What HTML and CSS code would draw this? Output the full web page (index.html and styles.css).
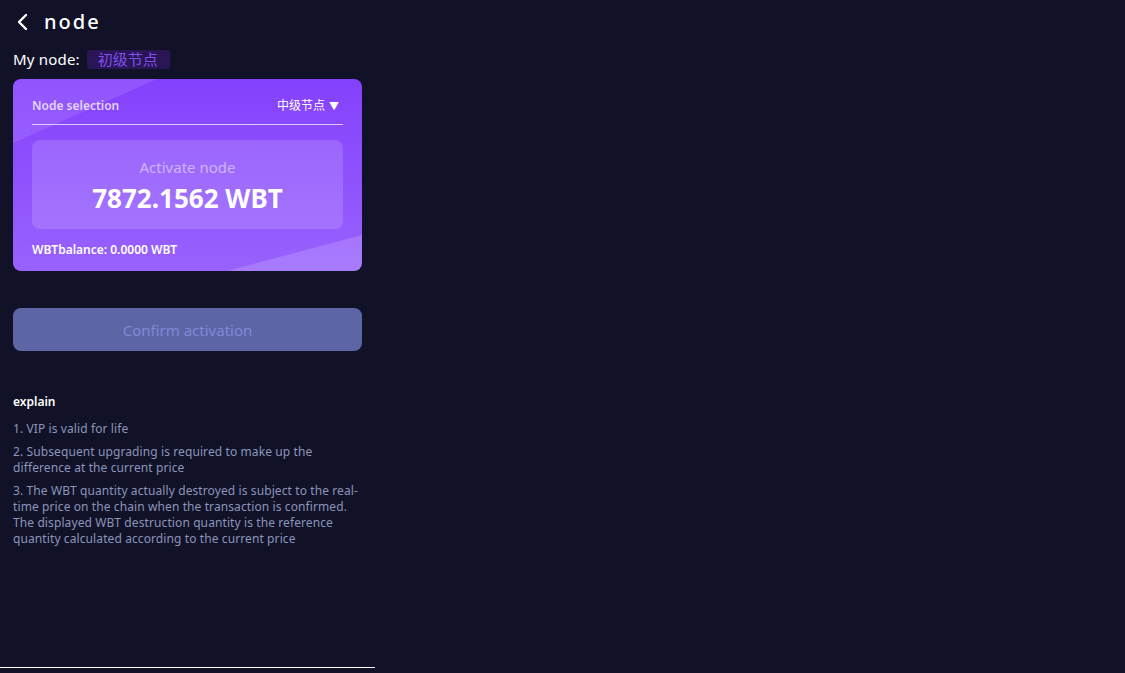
FILE: index.html
```html
<!DOCTYPE html>
<html lang="en">

<head>
    <meta charset="utf-8">
    <meta name="viewport" content="width=device-width, initial-scale=1.0">
    <title>node</title>
    <link rel="stylesheet" href="styles.css">
</head>

<body>
    <div class="page">
        <header class="topbar">
            <svg class="back" width="14" height="18" viewBox="0 0 14 18">
                <path d="M10 2 L3 9 L10 16" fill="none" stroke="#fff" stroke-width="2.4" stroke-linecap="round" stroke-linejoin="round" />
            </svg>
            <h1>node</h1>
        </header>

        <div class="mynode">
            <span>My node:</span>
            <span class="badge">初级节点</span>
        </div>

        <section class="card">
            <div class="card-head">
                <span class="label">Node selection</span>
                <span class="select">中级节点 <i class="arrow">▼</i></span>
            </div>
            <div class="amount">
                <p class="amount-title">Activate node</p>
                <p class="amount-value">7872.1562 WBT</p>
            </div>
            <p class="balance">WBTbalance: 0.0000 WBT</p>
        </section>

        <button class="confirm">Confirm activation</button>

        <section class="explain">
            <h2>explain</h2>
            <p>1. VIP is valid for life</p>
            <p>2. Subsequent upgrading is required to make up the difference at the current price</p>
            <p>3. The WBT quantity actually destroyed is subject to the real-time price on the chain when the transaction is confirmed. The displayed WBT destruction quantity is the reference quantity calculated according to the current price</p>
        </section>

        <div class="bottom-line"></div>
    </div>
</body>

</html>
```

FILE: styles.css
```css
* {
    box-sizing: border-box;
}

html,
body {
    margin: 0;
    height: 100%;
    background: #111228;
}

body {
    font-family: "Noto Sans", "Noto Sans CJK SC", sans-serif;
    color: #fff;
}

.page {
    width: 375px;
    height: 673px;
    padding: 0 13px;
    display: flex;
    flex-direction: column;
}

.topbar {
    height: 44px;
    display: flex;
    align-items: center;
    gap: 14px;
    padding-left: 3px;
}

.topbar h1 {
    margin: 0;
    font-size: 20px;
    font-weight: 500;
    letter-spacing: 2px;
    line-height: 1;
}

.mynode {
    display: flex;
    align-items: center;
    gap: 7px;
    font-size: 15px;
    height: 20px;
    margin-top: 5px;
    letter-spacing: 0.2px;
}

.badge {
    background: #2a1656;
    color: #7f50ec;
    font-size: 15px;
    letter-spacing: 0;
    padding: 0 12px 0 11px;
    height: 19px;
    line-height: 19px;
    border-radius: 3px;
}

.card {
    position: relative;
    overflow: hidden;
    margin-top: 10px;
    height: 192px;
    border-radius: 8px;
    padding: 0 19px;
    background: linear-gradient(180deg, #8441fd 0%, #9862fd 100%);
    display: flex;
    flex-direction: column;
}

.card::before,
.card::after {
    content: "";
    position: absolute;
    inset: 0;
    background: rgba(255, 255, 255, 0.1);
}

.card::before {
    clip-path: polygon(0 0, 144px 0, 0 64px);
}

.card::after {
    background: rgba(255, 255, 255, 0.16);
    clip-path: polygon(214px 100%, 100% 156px, 100% 100%);
}

.card > * {
    position: relative;
    z-index: 1;
}

.card-head {
    height: 46px;
    display: flex;
    justify-content: space-between;
    align-items: center;
    padding-top: 7px;
    font-size: 12px;
    border-bottom: 1px solid rgba(255, 255, 255, 0.7);
}

.label {
    color: #e3d4ff;
    font-weight: 600;
}

.select {
    color: #fff;
    padding-right: 4px;
}

.arrow {
    font-style: normal;
    font-size: 10px;
    margin-left: 1px;
}

.amount {
    margin-top: 15px;
    height: 89px;
    border-radius: 8px;
    background: rgba(255, 255, 255, 0.15);
    text-align: center;
    padding-top: 17px;
}

.amount-title {
    margin: 0;
    font-size: 15px;
    color: rgba(255, 255, 255, 0.5);
    line-height: 20px;
}

.amount-value {
    margin: 6px 0 0;
    font-size: 26px;
    font-weight: 700;
    line-height: 30px;
}

.balance {
    margin: 12px 0 0;
    font-size: 12px;
    font-weight: 600;
}

.confirm {
    margin-top: 37px;
    height: 43px;
    border: none;
    border-radius: 8px;
    background: #5d65a6;
    color: #7f89d6;
    font-family: inherit;
    font-size: 15px;
}

.explain {
    margin-top: 43px;
}

.explain h2 {
    margin: 0 0 11px;
    font-size: 12px;
    font-weight: 600;
    line-height: 16px;
}

.explain p {
    margin: 0 0 7px;
    font-size: 12px;
    line-height: 16px;
    letter-spacing: 0.1px;
    color: #8c95ba;
}

.bottom-line {
    margin: auto -13px 5px;
    height: 1px;
    background: #fff;
}
```
